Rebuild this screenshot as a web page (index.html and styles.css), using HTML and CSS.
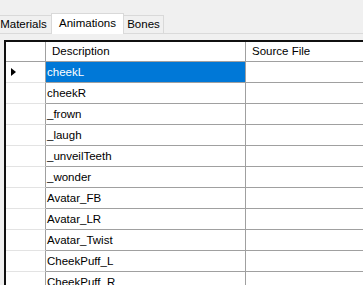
FILE: index.html
```html
<!DOCTYPE html>
<html>
<head>
	<meta charset="utf-8">
	<title>Animations</title>
	<link rel="stylesheet" href="styles.css">
</head>
<body>
	<div class="tabs">
		<div class="tab tab-materials">Materials</div>
		<div class="tab tab-active tab-animations">Animations</div>
		<div class="tab tab-bones">Bones</div>
	</div>

	<div class="page">
		<div class="grid">
			<div class="hdr rowhdr"></div>
			<div class="hdr">Description</div>
			<div class="hdr last">Source File</div>

			<div class="rowhdr current"><span class="arrow"></span></div>
			<div class="cell selected">cheekL</div>
			<div class="cell last"></div>

			<div class="rowhdr"></div><div class="cell">cheekR</div><div class="cell last"></div>
			<div class="rowhdr"></div><div class="cell">_frown</div><div class="cell last"></div>
			<div class="rowhdr"></div><div class="cell">_laugh</div><div class="cell last"></div>
			<div class="rowhdr"></div><div class="cell">_unveilTeeth</div><div class="cell last"></div>
			<div class="rowhdr"></div><div class="cell">_wonder</div><div class="cell last"></div>
			<div class="rowhdr"></div><div class="cell">Avatar_FB</div><div class="cell last"></div>
			<div class="rowhdr"></div><div class="cell">Avatar_LR</div><div class="cell last"></div>
			<div class="rowhdr"></div><div class="cell">Avatar_Twist</div><div class="cell last"></div>
			<div class="rowhdr"></div><div class="cell">CheekPuff_L</div><div class="cell last"></div>
			<div class="rowhdr"></div><div class="cell">CheekPuff_R</div><div class="cell last"></div>
		</div>
	</div>
</body>
</html>
```

FILE: styles.css
```css
html, body { margin: 0; height: 100%; overflow: hidden; }
body { background-color: #f0f0f0; font: 11.5px "Liberation Sans", Arial, sans-serif; color: #000; }

/* tab strip */
.tabs { display: flex; align-items: flex-end; height: 33px; border-bottom: 1px solid #dadada; }
.tab { box-sizing: border-box; height: 18px; line-height: 16px; text-align: center; background-color: #f0f0f0; border: 1px solid #d9d9d9; border-bottom: none; }
.tab-materials { width: 57px; margin-left: -5px; }
.tab-animations { width: 73px; margin-left: -1px; }
.tab-bones { width: 41px; margin-left: -1px; }
.tab-active { height: 21px; line-height: 19px; margin-bottom: -1px; background-color: #fff; position: relative; }

/* data grid */
.page { padding: 6px 0 0 4px; }
.grid { display: grid; grid-template-columns: 40px 200px 1fr; border-top: 2px solid #101010; border-left: 2px solid #101010; background-color: #fff; }
.grid > div { box-sizing: border-box; height: 21px; line-height: 20px; border-right: 1px solid #a0a0a0; border-bottom: 1px solid #a0a0a0; white-space: nowrap; overflow: hidden; }
.grid > .last { border-right: none; }
.grid > .hdr { height: 20px; line-height: 19px; padding-left: 6px; }
.grid > .rowhdr { padding-left: 0; border-bottom-color: #e3e3e3; }
.grid > .hdr.rowhdr { border-bottom-color: #a0a0a0; }
.cell { padding-left: 1px; }
.cell.selected { background-color: #0078d7; color: #fff; }
.current { display: flex; align-items: center; padding-left: 5px !important; }
.arrow { width: 0; height: 0; border-top: 4px solid transparent; border-bottom: 4px solid transparent; border-left: 5px solid #000; }
```
